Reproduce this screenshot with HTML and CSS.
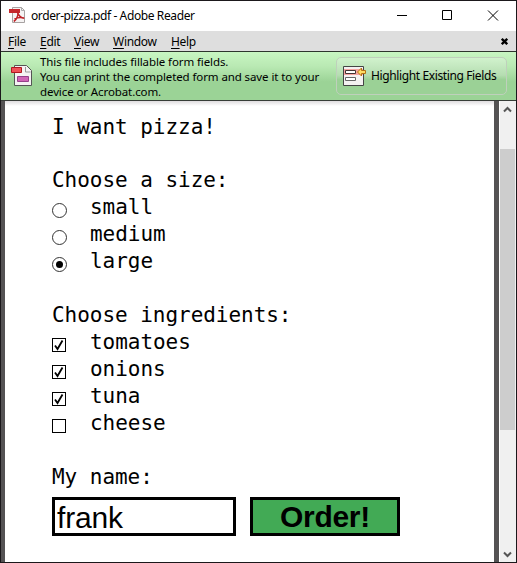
FILE: index.html
```html
<!DOCTYPE html>
<html lang="en">
<head>
<meta charset="utf-8">
<title>order-pizza.pdf - Adobe Reader</title>
<link rel="stylesheet" href="styles.css">
</head>
<body>
<div class="window">
  <header class="titlebar">
    <svg class="app-icon" width="17" height="17" viewBox="0 0 17 17">
      <path d="M3.5.5h9l3 3v12h-12z" fill="#f5f3f3" stroke="#a7a2a2"/>
      <path d="M12.5.5v3h3" fill="none" stroke="#aaa"/>
      <path d="M0 2h11v4H0z" fill="#c5282c"/>
      <path d="M8.3 4.5c1 3.5 3 6.5 7 6.8M8.8 5c.7 4-1.500 8-4 9.500M5.500 12c3-1.500 6-2 9.500-1" fill="none" stroke="#bf2227" stroke-width="1.5"/>
    </svg>
    <span class="title">order-pizza.pdf - Adobe Reader</span>
    <svg class="controls" width="102" height="12" viewBox="0 0 102 12" fill="none" stroke="#000">
      <path d="M0 5.5h10M45.5.5h9v9h-9zM91 .5l10 10M101 .5l-10 10"/>
    </svg>
  </header>
  <nav class="menubar">
    <span class="m-file"><u>F</u>ile</span>
    <span class="m-edit"><u>E</u>dit</span>
    <span class="m-view"><u>V</u>iew</span>
    <span class="m-window"><u>W</u>indow</span>
    <span class="m-help"><u>H</u>elp</span>
    <svg class="close" width="7" height="7" viewBox="0 0 7 7"><path d="M.8.8l5.400 5.400M6.200.8L.8 6.200" stroke="#000" stroke-width="2.300"/></svg>
  </nav>
  <section class="banner">
    <svg class="form-icon" width="22" height="24" viewBox="0 0 22 24">
      <path d="M3.5 1.5h12l5 5v15h-17z" fill="#f5f2f3" stroke="#555"/>
      <path d="M14.5 3v5h5" fill="none" stroke="#999"/>
      <path d="M.5 3.500h10v5H.5z" fill="#ef5158" stroke="#b01820"/>
      <path d="M6.500 12.500h11v5h-11z" fill="#d064b5" stroke="#96408a"/>
    </svg>
    <div class="message">
      <div class="line">This file includes fillable form fields.</div>
      <div class="line">You can print the completed form and save it to your</div>
      <div class="line">device or Acrobat.com.</div>
    </div>
    <button class="highlight">
      <svg width="24" height="22" viewBox="0 0 24 22">
        <path d="M.5 1.500h20v19H.5z" fill="#f4f1f1" stroke="#444"/>
        <path d="M1 4h19v6H1z" fill="#f4a4a1"/>
        <path d="M2.500 5.500h10v3h-10z" fill="#fff" stroke="#433"/>
        <path d="M2.500 12.500h10v3h-10z" fill="#fff" stroke="#666"/>
        <path d="M14.500 7l4-4v2.500h4v3h-4V11z" fill="#ffdc65" stroke="#b57112"/>
      </svg>
      <span>Highlight Existing Fields</span>
    </button>
  </section>
  <main class="viewer">
    <form class="page">
      <p class="heading">I want pizza!</p>
      <p class="section">Choose a size:</p>
      <label><i class="radio"></i><span>small</span></label>
      <label><i class="radio"></i><span>medium</span></label>
      <label><i class="radio selected"></i><span>large</span></label>
      <p class="section">Choose ingredients:</p>
      <label><i class="check"><svg viewBox="0 0 12 12"><path d="M2 6.500l2.500 3.500L9.500 1.500"/></svg></i><span>tomatoes</span></label>
      <label><i class="check"><svg viewBox="0 0 12 12"><path d="M2 6.500l2.500 3.500L9.500 1.500"/></svg></i><span>onions</span></label>
      <label><i class="check"><svg viewBox="0 0 12 12"><path d="M2 6.500l2.500 3.500L9.500 1.500"/></svg></i><span>tuna</span></label>
      <label><i class="check"></i><span>cheese</span></label>
      <p class="section">My name:</p>
      <div class="fields"><div class="name">frank</div><div class="order"><span>Order!</span></div></div>
    </form>
    <div class="scrollbar">
      <svg width="9" height="7" viewBox="0 0 9 7"><path d="M1 5.500L4.500 2 8 5.500" fill="none" stroke="#555" stroke-width="2"/></svg>
      <div class="thumb"></div>
      <svg class="down" width="9" height="7" viewBox="0 0 9 7"><path d="M1 1.500L4.500 5 8 1.500" fill="none" stroke="#555" stroke-width="2"/></svg>
    </div>
  </main>
</div>
</body>
</html>
```
FILE: styles.css
```css
* { box-sizing: border-box; }
body { margin: 0; overflow: hidden; }
p { margin: 0; }

.window {
  width: 517px;
  height: 563px;
  display: flex;
  flex-direction: column;
  border: 1px solid #1b181b;
  background: #fff;
  color: #000;
  font-family: "Noto Sans", sans-serif;
  font-size: 11.5px;
}

.titlebar { height: 30px; display: flex; align-items: center; padding: 0 17px 1px 8px; }
.title { margin: 0 0 0 5px; font-size: 12px; letter-spacing: -0.39px; white-space: nowrap; }
.controls { margin-left: auto; margin-top: 1px; }

.menubar {
  height: 20px;
  display: flex;
  align-items: center;
  background: #dedede;
  padding: 0 8px 0 7px;
  font-size: 12px;
  letter-spacing: -0.3px;
}
.menubar span { flex: none; white-space: nowrap; }
.menubar u { text-underline-offset: 2px; }
.m-file { width: 32px; }
.m-edit { width: 34px; }
.m-view { width: 39px; }
.m-window { width: 58px; }
.close { margin-left: auto; }

.banner {
  height: 50px;
  display: flex;
  align-items: center;
  border-top: 1px solid #2d352d;
  border-bottom: 1px solid #373d38;
  background: linear-gradient(#c8f6c2 0, #b9e9b3 30%, #9bd396 62%, #9bd396);
  padding: 0 9px 0 10px;
}
.form-icon { flex: none; }
.message { width: 297px; margin-left: 7px; padding-top: 1px; }
.line { line-height: 15px; white-space: nowrap; letter-spacing: -0.1px; }
.highlight {
  width: 171px;
  height: 38px;
  flex: none;
  margin-left: -1px;
  display: flex;
  align-items: center;
  padding: 0 0 1px 6px;
  border: 1px solid #bfd0bc;
  border-radius: 5px;
  background: linear-gradient(#d1f2cd, #b5ddb1 48%, #9bd196 60%, #9bd196);
  color: #000;
  font: 12px "Noto Sans", sans-serif;
  letter-spacing: -0.38px;
  white-space: nowrap;
}
.highlight svg { flex: none; margin-right: 4px; }

.viewer { height: 461px; display: flex; background: #555354; padding-left: 4px; }
.page {
  width: 489px;
  padding: 13px 0 0 47px;
  background: linear-gradient(#dfdcdf, #fff 5px);
  font: 21px/27px "DejaVu Sans Mono", monospace;
  letter-spacing: -0.04px;
}
.section { margin-top: 27px; }
.heading + .section { margin-top: 26px; }
.page label { height: 27px; display: flex; }
.page label span { margin-left: 23px; }
.radio, .check { width: 15px; height: 15px; flex: none; margin-top: 9px; border: 1px solid #333; }
.radio { border-radius: 50%; display: flex; align-items: center; justify-content: center; }
.selected::before { content: ""; width: 7px; height: 7px; border-radius: 50%; background: #000; }
.check { width: 14px; height: 14px; margin-right: 1px; border-color: #000; }
.check svg { display: block; width: 12px; height: 12px; fill: none; stroke: #000; stroke-width: 1.8; }

.fields { display: flex; gap: 14px; margin-top: 6px; font: 30px/34px "Liberation Sans", sans-serif; letter-spacing: 0; }
.name, .order { height: 39px; border: 3px solid #000; }
.name { width: 184px; padding: 1px 0 0 2px; letter-spacing: -0.2px; }
.order { width: 150px; background: #42aa55; font-weight: bold; text-align: center; letter-spacing: -0.3px; }

.scrollbar {
  width: 17px;
  margin-left: 5px;
  background: #f0f0f0;
  border-left: 1px solid #fff;
  display: flex;
  flex-direction: column;
  align-items: center;
  padding: 5px 1px 4px 0;
}
.thumb { width: 15px; height: 281px; margin-top: 36px; background: #cdcdcd; }
.down { margin-top: auto; }
```
